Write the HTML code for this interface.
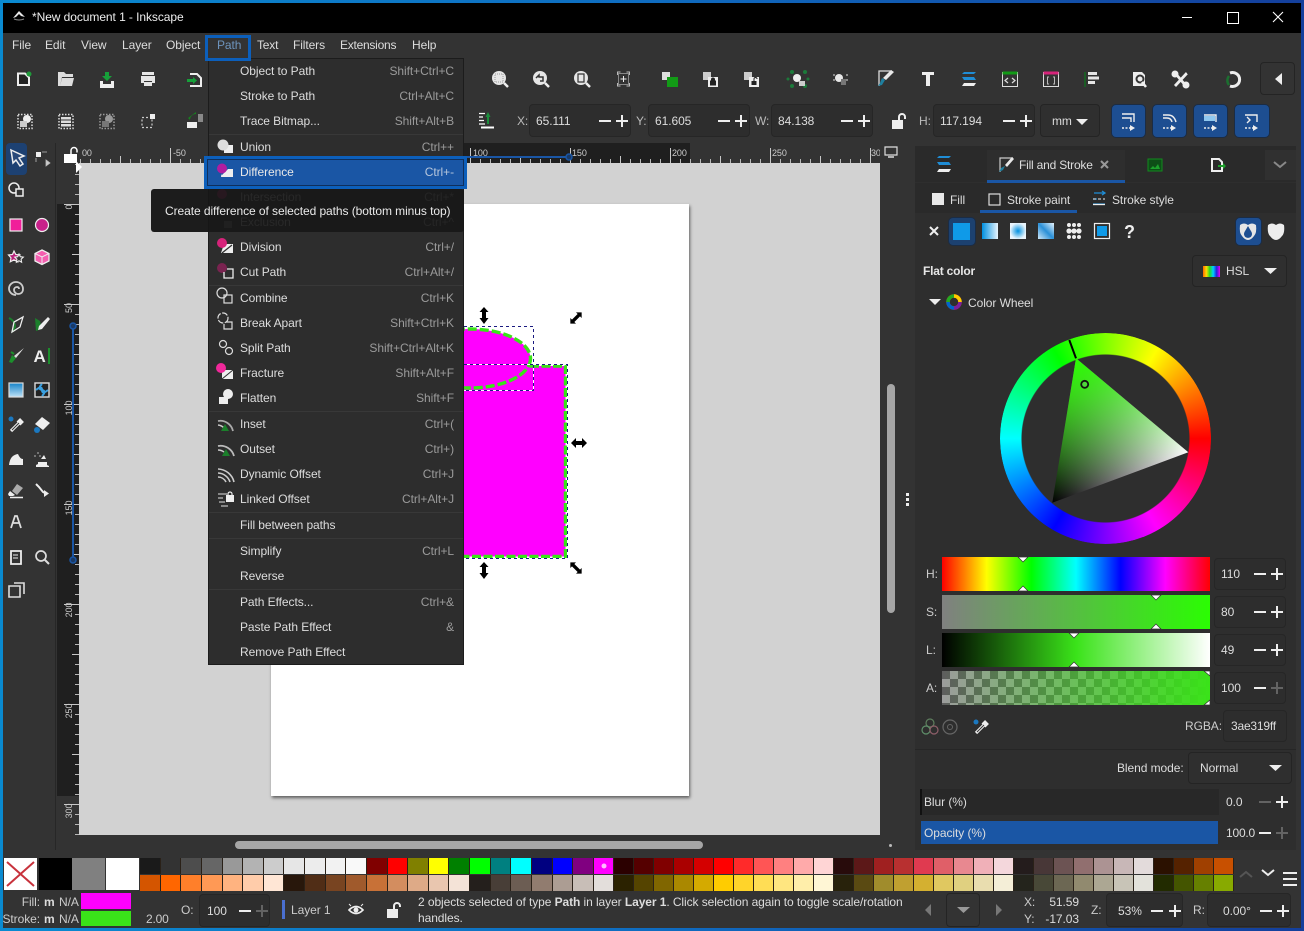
<!DOCTYPE html>
<html><head><meta charset="utf-8"><title>New document 1 - Inkscape</title>
<style>
html,body{margin:0;padding:0;background:#333}
#r{position:relative;width:1304px;height:931px;overflow:hidden;background:linear-gradient(90deg,#0a8ad0 0,#0f6cc0 50%,#143f9c 100%);font:12px/14px "Liberation Sans",sans-serif;color:#ddd;letter-spacing:-.07px}
#r div,#r span.a,#r svg{position:absolute}
.t{position:absolute;white-space:nowrap;line-height:14px}
.d{color:#9b9b9b}
.s{background:#2d2d2d;border:1px solid #262626;border-radius:4px;box-sizing:border-box}
.m{width:12px;height:2px;background:#eee}
.p{width:12px;height:12px;background:linear-gradient(#eee,#eee) center/12px 2px no-repeat,linear-gradient(#eee,#eee) center/2px 12px no-repeat}
.o{opacity:.28}
.b{background:#1d4e91;border:1px solid #1b2c44;border-radius:5px;box-sizing:border-box}
.dd{background:#2f2f2f;border:1px solid #242424;border-radius:4px;box-sizing:border-box}
.row{display:flex;left:140px;height:16px}
.row i{display:block;flex:none;width:20px;height:16px;box-sizing:border-box;border-right:1px solid #2a2118}
.row i:nth-child(-n+22){width:20.64px}
.rl{font-size:9px;color:#ccc;line-height:10px;white-space:nowrap}
.v{transform:translate(-50%,-50%) rotate(-90deg)}
.k{right:10px;color:#9b9b9b;white-space:nowrap;line-height:14px}
</style></head><body><div id="r">

<!-- window base -->
<div style="left:3px;top:3px;width:1298px;height:30px;background:#000"></div>
<div style="left:3px;top:33px;width:1298px;height:895px;background:#333"></div>
<div class="t" style="left:32px;top:10px;color:#eee">*New document 1 - Inkscape</div>

<!-- window buttons -->
<div style="left:1182px;top:17px;width:10px;height:1px;background:#fff"></div>
<div style="left:1227px;top:12px;width:10px;height:10px;border:1px solid #fff"></div>

<!-- menu bar -->
<div class="t" style="left:12px;top:38px">File</div>
<div class="t" style="left:45px;top:38px">Edit</div>
<div class="t" style="left:81px;top:38px">View</div>
<div class="t" style="left:122px;top:38px">Layer</div>
<div class="t" style="left:166px;top:38px">Object</div>
<div class="t" style="left:257px;top:38px;letter-spacing:-.2px">Text</div>
<div class="t" style="left:293px;top:38px;letter-spacing:-.1px">Filters</div>
<div class="t" style="left:340px;top:38px;letter-spacing:-.25px">Extensions</div>
<div class="t" style="left:412px;top:38px">Help</div>

<!-- rulers -->
<div style="left:79px;top:143px;width:801px;height:20px;background:linear-gradient(90deg,#333 0,#333 192px,#1f1f1f 192px,#1f1f1f 611px,#333 611px)"></div>
<div style="left:79px;top:143px;width:801px;height:20px;background:linear-gradient(90deg,#c8c8c8 1px,transparent 1px) 91px 100%/100px 15px repeat-x,linear-gradient(90deg,#c8c8c8 1px,transparent 1px) 41px 100%/100px 7px repeat-x,linear-gradient(90deg,#b8b8b8 1px,transparent 1px) 1px 100%/10px 4px repeat-x"></div>
<div style="left:57px;top:163px;width:22px;height:672px;background:linear-gradient(#333 0,#333 41px,#1f1f1f 41px,#1f1f1f 633px,#333 633px)"></div>
<div style="left:57px;top:163px;width:22px;height:672px;background:linear-gradient(#c8c8c8 1px,transparent 1px) 100% 41px/15px 100px repeat-y,linear-gradient(#c8c8c8 1px,transparent 1px) 100% 91px/7px 100px repeat-y,linear-gradient(#b8b8b8 1px,transparent 1px) 100% 1px/4px 10px repeat-y"></div>
<div class="rl" style="left:82px;top:148px">00</div>
<div class="rl" style="left:173px;top:148px">-50</div>
<div class="rl" style="left:473px;top:148px">100</div>
<div class="rl" style="left:572px;top:148px">150</div>
<div class="rl" style="left:672px;top:148px">200</div>
<div class="rl" style="left:772px;top:148px">250</div>
<div class="rl" style="left:871px;top:148px;width:9px;overflow:hidden">300</div>
<div class="rl v" style="left:69px;top:207px">0</div>
<div class="rl v" style="left:69px;top:308px">50</div>
<div class="rl v" style="left:69px;top:408px">100</div>
<div class="rl v" style="left:69px;top:508px">150</div>
<div class="rl v" style="left:69px;top:610px">200</div>
<div class="rl v" style="left:69px;top:711px">250</div>
<div class="rl v" style="left:69px;top:811px">300</div>

<!-- canvas -->
<div style="left:79px;top:163px;width:801px;height:672px;background:#d2d2d2;overflow:hidden">
  <div style="left:192px;top:41px;width:418px;height:592px;background:#fff;box-shadow:1px 2px 3px rgba(0,0,0,.55)"></div>
</div>
<!-- scrollbars -->
<div style="left:235px;top:841px;width:468px;height:8px;background:#a6a6a6;border-radius:4px"></div>
<div style="left:887px;top:384px;width:8px;height:229px;background:#a6a6a6;border-radius:4px"></div>
<div style="left:889px;top:844px;width:3px;height:3px;background:#bbb;border-radius:2px"></div>
<div style="left:906px;top:493px;width:3px;height:3px;background:#eee"></div>
<div style="left:906px;top:498px;width:3px;height:3px;background:#eee"></div>
<div style="left:906px;top:503px;width:3px;height:3px;background:#eee"></div>

<!-- spin boxes top -->
<div class="t" style="left:517px;top:114px;color:#bbb">X:</div>
<div class="s" style="left:529px;top:104px;width:102px;height:33px"><span class="t" style="left:6px;top:9px">65.111</span><div class="m" style="left:69px;top:15px"></div><div class="p" style="left:86px;top:10px"></div></div>
<div class="t" style="left:636px;top:114px;color:#bbb">Y:</div>
<div class="s" style="left:648px;top:104px;width:102px;height:33px"><span class="t" style="left:6px;top:9px">61.605</span><div class="m" style="left:69px;top:15px"></div><div class="p" style="left:86px;top:10px"></div></div>
<div class="t" style="left:755px;top:114px;color:#bbb">W:</div>
<div class="s" style="left:771px;top:104px;width:102px;height:33px"><span class="t" style="left:6px;top:9px">84.138</span><div class="m" style="left:69px;top:15px"></div><div class="p" style="left:86px;top:10px"></div></div>
<div class="t" style="left:919px;top:114px;color:#bbb">H:</div>
<div class="s" style="left:933px;top:104px;width:102px;height:33px"><span class="t" style="left:6px;top:9px">117.194</span><div class="m" style="left:69px;top:15px"></div><div class="p" style="left:86px;top:10px"></div></div>
<div class="dd" style="left:1040px;top:104px;width:60px;height:33px"><span class="t" style="left:11px;top:9px">mm</span></div>
<div class="b" style="left:1111px;top:104px;width:35px;height:34px"></div>
<div class="b" style="left:1152px;top:104px;width:35px;height:34px"></div>
<div class="b" style="left:1193px;top:104px;width:35px;height:34px"></div>
<div class="b" style="left:1234px;top:104px;width:36px;height:34px"></div>
<div class="dd" style="left:1260px;top:62px;width:35px;height:33px;background:#333"></div>

<!-- left tool selected -->
<div style="left:6px;top:143px;width:21px;height:32px;background:#1d4172;border-radius:4px"></div>

<!-- separators -->
<div style="left:55px;top:143px;width:1px;height:707px;background:#272727"></div>

<!-- right panel -->
<div style="left:915px;top:146px;width:381px;height:704px;background:#2e2e2e"></div>
<div style="left:915px;top:146px;width:381px;height:36px;background:#2a2a2a"></div>
<div style="left:987px;top:150px;width:138px;height:30px;background:#2e2e2e"></div>
<div style="left:987px;top:180px;width:138px;height:3px;background:#1a56a5"></div>
<div style="left:1265px;top:150px;width:31px;height:30px;background:#303030"></div>
<div class="t" style="left:1019px;top:158px;letter-spacing:-.2px">Fill and Stroke</div>
<div style="left:915px;top:183px;width:381px;height:30px;background:#2a2a2a"></div>
<div style="left:980px;top:210px;width:97px;height:3px;background:#1a56a5"></div>
<div class="t" style="left:950px;top:193px">Fill</div>
<div class="t" style="left:1007px;top:193px">Stroke paint</div>
<div class="t" style="left:1112px;top:193px">Stroke style</div>
<div class="b" style="left:948px;top:217px;width:28px;height:29px;background:#1c4170"></div>
<div class="b" style="left:1235px;top:217px;width:27px;height:29px"></div>
<div class="t" style="left:923px;top:264px;font-weight:bold;color:#e6e6e6;letter-spacing:-.2px">Flat color</div>
<div class="dd" style="left:1192px;top:255px;width:95px;height:32px"><span class="t" style="left:33px;top:8px">HSL</span></div>
<div class="t" style="left:968px;top:296px">Color Wheel</div>

<!-- sliders -->
<div class="t" style="left:926px;top:567px;color:#ccc">H:</div>
<div class="t" style="left:926px;top:605px;color:#ccc">S:</div>
<div class="t" style="left:926px;top:643px;color:#ccc">L:</div>
<div class="t" style="left:926px;top:681px;color:#ccc">A:</div>
<div style="left:942px;top:557px;width:268px;height:34px;background:linear-gradient(90deg,#f00,#ff0 16.67%,#0f0 33.33%,#0ff 50%,#00f 66.67%,#f0f 83.33%,#f00)"></div>
<div style="left:942px;top:595px;width:268px;height:34px;background:linear-gradient(90deg,#808080,#2bfd03)"></div>
<div style="left:942px;top:633px;width:268px;height:34px;background:linear-gradient(90deg,#000,#3ae319 50%,#fff)"></div>
<div style="left:942px;top:671px;width:268px;height:34px;background:linear-gradient(90deg,rgba(58,227,25,0),#3ae319),repeating-conic-gradient(#9c9c9c 0 25%,#5e5e5e 0 50%) 0 0/16px 16px"></div>
<div class="s" style="left:1214px;top:558px;width:72px;height:32px"><span class="t" style="left:6px;top:8px">110</span><div class="m" style="left:39px;top:14px"></div><div class="p" style="left:56px;top:9px"></div></div>
<div class="s" style="left:1214px;top:596px;width:72px;height:32px"><span class="t" style="left:6px;top:8px">80</span><div class="m" style="left:39px;top:14px"></div><div class="p" style="left:56px;top:9px"></div></div>
<div class="s" style="left:1214px;top:634px;width:72px;height:32px"><span class="t" style="left:6px;top:8px">49</span><div class="m" style="left:39px;top:14px"></div><div class="p" style="left:56px;top:9px"></div></div>
<div class="s" style="left:1214px;top:672px;width:72px;height:32px"><span class="t" style="left:6px;top:8px">100</span><div class="m" style="left:39px;top:14px"></div><div class="p o" style="left:56px;top:9px"></div></div>
<div class="t" style="left:1185px;top:719px;color:#ccc">RGBA:</div>
<div class="s" style="left:1223px;top:710px;width:64px;height:32px"><span class="t" style="left:7px;top:8px;letter-spacing:-.2px">3ae319ff</span></div>
<div style="left:915px;top:749px;width:381px;height:1px;background:#262626"></div>
<div class="t" style="left:1117px;top:761px">Blend mode:</div>
<div class="dd" style="left:1188px;top:752px;width:104px;height:32px"><span class="t" style="left:11px;top:8px">Normal</span></div>
<div style="left:920px;top:789px;width:299px;height:26px;background:#282828;border-left:2px solid #111;box-sizing:border-box"></div>
<div class="t" style="left:924px;top:795px">Blur (%)</div>
<div class="t" style="left:1226px;top:795px">0.0</div>
<div class="m o" style="left:1259px;top:801px"></div><div class="p" style="left:1276px;top:796px"></div>
<div style="left:921px;top:821px;width:297px;height:23px;background:#1a56a5"></div>
<div class="t" style="left:924px;top:826px">Opacity (%)</div>
<div class="t" style="left:1226px;top:826px;letter-spacing:-.2px">100.0</div>
<div class="m" style="left:1259px;top:832px"></div><div class="p o" style="left:1276px;top:827px"></div>

<!-- palette -->
<div style="left:4px;top:858px;width:33px;height:32px;background:#fff"></div>
<div style="left:39px;top:858px;width:33px;height:32px;background:#000"></div>
<div style="left:72px;top:858px;width:33px;height:32px;background:#808080"></div>
<div style="left:106px;top:858px;width:33px;height:32px;background:#fff"></div>
<div class="row" style="top:858px">
<i style="background:#1a1a1a"></i><i style="background:#333"></i><i style="background:#4d4d4d"></i><i style="background:#666"></i><i style="background:#999"></i><i style="background:#b3b3b3"></i><i style="background:#ccc"></i><i style="background:#e6e6e6"></i><i style="background:#ececec"></i><i style="background:#f2f2f2"></i><i style="background:#f9f9f9"></i><i style="background:#800000"></i><i style="background:#f00"></i><i style="background:#808000"></i><i style="background:#ff0"></i><i style="background:#008000"></i><i style="background:#0f0"></i><i style="background:#008080"></i><i style="background:#0ff"></i><i style="background:#000080"></i><i style="background:#00f"></i><i style="background:#800080"></i><i style="background:#f0f"></i><i style="background:#2b0000"></i><i style="background:#550000"></i><i style="background:#800000"></i><i style="background:#aa0000"></i><i style="background:#d40000"></i><i style="background:#f00"></i><i style="background:#ff2a2a"></i><i style="background:#f55"></i><i style="background:#ff8080"></i><i style="background:#faa"></i><i style="background:#ffd5d5"></i><i style="background:#280b0b"></i><i style="background:#5c1818"></i><i style="background:#a02020"></i><i style="background:#b83030"></i><i style="background:#e03a50"></i><i style="background:#e05f68"></i><i style="background:#e88890"></i><i style="background:#f0b0b8"></i><i style="background:#f4d7dc"></i><i style="background:#241c1c"></i><i style="background:#483737"></i><i style="background:#6c5353"></i><i style="background:#916f6f"></i><i style="background:#ac9393"></i><i style="background:#c8b7b7"></i><i style="background:#e3dbdb"></i><i style="background:#2b1100"></i><i style="background:#552200"></i><i style="background:#a04000"></i><i style="background:#c85000"></i>
</div>
<div class="row" style="top:875px">
<i style="background:#d45500"></i><i style="background:#f60"></i><i style="background:#ff7f2a"></i><i style="background:#f95"></i><i style="background:#ffb380"></i><i style="background:#fca"></i><i style="background:#ffe6d5"></i><i style="background:#28170b"></i><i style="background:#502d16"></i><i style="background:#784421"></i><i style="background:#a05a2c"></i><i style="background:#c87137"></i><i style="background:#d38d5f"></i><i style="background:#deaa87"></i><i style="background:#e9c6af"></i><i style="background:#f4e3d7"></i><i style="background:#241f1c"></i><i style="background:#483e37"></i><i style="background:#6c5d53"></i><i style="background:#917c6f"></i><i style="background:#ac9d93"></i><i style="background:#c8beb7"></i><i style="background:#e3dedb"></i><i style="background:#2b2200"></i><i style="background:#554400"></i><i style="background:#806600"></i><i style="background:#aa8800"></i><i style="background:#d4aa00"></i><i style="background:#fc0"></i><i style="background:#ffd42a"></i><i style="background:#fd5"></i><i style="background:#ffe680"></i><i style="background:#fea"></i><i style="background:#fff6d5"></i><i style="background:#28220b"></i><i style="background:#5a4a12"></i><i style="background:#a08c2c"></i><i style="background:#c0a030"></i><i style="background:#d4b030"></i><i style="background:#e0c860"></i><i style="background:#e0d080"></i><i style="background:#e9ddaf"></i><i style="background:#f4eed7"></i><i style="background:#24241c"></i><i style="background:#484837"></i><i style="background:#6c6753"></i><i style="background:#918a6f"></i><i style="background:#aca793"></i><i style="background:#c8c4b7"></i><i style="background:#e3e2db"></i><i style="background:#222b00"></i><i style="background:#445500"></i><i style="background:#668000"></i><i style="background:#88aa00"></i>
</div>

<!-- status -->
<div class="t" style="right:1264px;top:895px;color:#ccc">Fill:</div>
<div class="t" style="right:1264px;top:912px;color:#ccc">Stroke:</div>
<div class="t" style="left:44px;top:895px;font-weight:bold">m</div>
<div class="t" style="left:44px;top:912px;font-weight:bold">m</div>
<div class="t" style="left:59px;top:895px;color:#ccc">N/A</div>
<div class="t" style="left:59px;top:912px;color:#ccc">N/A</div>
<div style="left:81px;top:893px;width:50px;height:16px;background:#f0f"></div>
<div style="left:81px;top:911px;width:50px;height:15px;background:#3ae319"></div>
<div class="t" style="left:146px;top:912px;color:#ccc;letter-spacing:-.2px">2.00</div>
<div class="t" style="left:181px;top:903px;color:#ccc">O:</div>
<div class="s" style="left:199px;top:894px;width:71px;height:33px"><span class="t" style="left:7px;top:9px">100</span><div class="m" style="left:39px;top:15px"></div><div class="p o" style="left:56px;top:10px"></div></div>
<div style="left:282px;top:900px;width:3px;height:19px;background:#4a6fd0"></div>
<div class="t" style="left:291px;top:903px;color:#ccc">Layer 1</div>
<div class="t" style="left:418px;top:895px;color:#ddd;letter-spacing:-.08px">2 objects selected of type <b>Path</b> in layer <b>Layer 1</b>. Click selection again to toggle scale/rotation</div>
<div class="t" style="left:418px;top:911px;color:#ddd">handles.</div>
<div class="dd" style="left:946px;top:893px;width:34px;height:34px;background:#333"></div>
<div class="t" style="left:1024px;top:895px;color:#ccc">X:</div>
<div class="t" style="left:1024px;top:912px;color:#ccc">Y:</div>
<div class="t" style="right:225px;top:895px">51.59</div>
<div class="t" style="right:225px;top:912px">-17.03</div>
<div class="t" style="left:1091px;top:903px;color:#ccc">Z:</div>
<div class="s" style="left:1106px;top:893px;width:77px;height:34px"><span class="t" style="left:11px;top:10px">53%</span><div class="m" style="left:44px;top:16px"></div><div class="p" style="left:62px;top:11px"></div></div>
<div class="t" style="left:1193px;top:903px;color:#ccc">R:</div>
<div class="s" style="left:1207px;top:893px;width:84px;height:34px"><span class="t" style="left:15px;top:10px">0.00°</span><div class="m" style="left:52px;top:16px"></div><div class="p" style="left:69px;top:11px"></div></div>

<!-- colour wheel ring -->
<div style="left:1000px;top:333px;width:211px;height:211px;border-radius:50%;background:conic-gradient(from 90deg,#f00,#f0f,#00f,#0ff,#0f0,#ff0,#f00);-webkit-mask:radial-gradient(circle,transparent 83.5px,#000 84.5px);mask:radial-gradient(circle,transparent 83.5px,#000 84.5px)"></div>

<!-- main icon layer -->
<svg width="1304" height="931" style="left:0;top:0" fill="none">
<defs>
<linearGradient id="g1" gradientUnits="userSpaceOnUse" x1="1052.3" y1="502.7" x2="1188.3" y2="452.3"><stop offset="0" stop-color="#000"/><stop offset="1" stop-color="#fff"/></linearGradient>
<linearGradient id="g2" gradientUnits="userSpaceOnUse" x1="1076" y1="358.3" x2="1120.2" y2="477.5"><stop offset="0" stop-color="#2aff00"/><stop offset="1" stop-color="#2aff00" stop-opacity="0"/></linearGradient>
<linearGradient id="lg"><stop offset="0" stop-color="#0090e0"/><stop offset="1" stop-color="#e8f4fc"/></linearGradient>
<radialGradient id="rg"><stop offset="0" stop-color="#0090e0"/><stop offset="1" stop-color="#e8f4fc"/></radialGradient>
<linearGradient id="mg" x1="0" y1="1" x2="1" y2="0"><stop offset="0" stop-color="#cfe8f8"/><stop offset=".5" stop-color="#2a90d8"/><stop offset="1" stop-color="#e8f4fc"/></linearGradient>
<linearGradient id="gg" x1="0" y1="0" x2="0" y2="1"><stop offset="0" stop-color="#1482c8"/><stop offset="1" stop-color="#bfe2f7"/></linearGradient>
<linearGradient id="hs"><stop offset="0" stop-color="#f60"/><stop offset=".2" stop-color="#fd0"/><stop offset=".4" stop-color="#2d2"/><stop offset=".6" stop-color="#0cf"/><stop offset=".8" stop-color="#22d"/><stop offset="1" stop-color="#e0e"/></linearGradient>
</defs>

<!-- canvas shapes -->
<rect x="464" y="366" width="101.500" height="190.500" fill="#f0f"/>
<ellipse cx="470" cy="358.500" rx="60.500" ry="29.500" fill="#f0f"/>
<ellipse cx="470" cy="358.500" rx="60.500" ry="29.500" stroke="#3ae319" stroke-width="3.400" stroke-dasharray="9 3"/>
<path d="M530 366H565.500V556.500H464" stroke="#3ae319" stroke-width="3.400" stroke-dasharray="9 2.500"/>
<path d="M464 326.500H533.500V390.500H464M464 364.500H567.500V558.500H464" stroke="#fff" stroke-width="1"/>
<path d="M464 326.500H533.500V390.500H464M464 364.500H567.500V558.500H464" stroke="#1a1a80" stroke-width="1" stroke-dasharray="3 3"/>
<g fill="#000">
<path d="M484 307l4.500 5h-2.500v6h2.500l-4.500 6-4.500-6h2.500v-6h-2.500z"/>
<path d="M484 562l4.500 5h-2.500v6h2.500l-4.500 6-4.500-6h2.500v-6h-2.500z"/>
<path d="M571 443l5-5v3h6v-3l5 5-5 5v-3h-6v3z"/>
<path transform="translate(576,318) rotate(-45)" d="M-8 0l4-4v2.300h8V-4l4 4-4 4v-2.300h-8V4z"/>
<path transform="translate(576,568) rotate(45)" d="M-8 0l4-4v2.300h8V-4l4 4-4 4v-2.300h-8V4z"/>
</g>
<!-- ruler selection -->
<path d="M464 157H569" stroke="#1a56a5" stroke-width="2"/><circle cx="569" cy="157" r="3" stroke="#1a56a5" stroke-width="1.500" fill="#1a3a66"/>
<path d="M73 326V559" stroke="#1a56a5" stroke-width="2"/><circle cx="73" cy="326" r="3" stroke="#1a56a5" stroke-width="1.500" fill="#1a3a66"/><circle cx="73" cy="560" r="3" stroke="#1a56a5" stroke-width="1.500" fill="#1a3a66"/>
<path d="M77 162l6 6-6 6z" fill="#fff" transform="translate(-1,-1)"/>
<!-- ruler lock + monitor -->
<path d="M64 154h13v9H64z" fill="#fff"/><path d="M71 154v-3.500a3 3 0 0 1 6 0v2" stroke="#fff" stroke-width="1.500"/>
<path d="M885 147h12v8h-12z" stroke="#ddd" stroke-width="1.200"/><path d="M888 157h6" stroke="#ddd" stroke-width="1.500"/>

<!-- titlebar -->
<path d="M13 18L19 11L25 17L21 16L19 14L16 17z" fill="#e8e8e8"/><path d="M14 19Q19 21 24 19" stroke="#888" stroke-width="1"/>
<path d="M1273 12l10 10M1283 12l-10 10" stroke="#fff" stroke-width="1.100"/>

<!-- toolbar row 1 -->
<g stroke="#eee" stroke-width="2">
<path d="M18 73.500h7l4 4V85H18z" fill="#222"/>
</g>
<circle cx="29" cy="74" r="2.500" fill="#1f9b3a"/>
<path d="M58 72h6l2 2h7v3H62l-2 9h-2z M62 78h12l-2 8H60z" fill="#ddd"/>
<path d="M100 81h3v3h8v-3h3v7h-14z" fill="#eee"/><path d="M105 72h4v4h3l-5 5-5-5h3z" fill="#17a03a"/>
<path d="M142 75h12v-3h-12zM141 76h14v7h-3v-2h-8v2h-3zM144 82h8v4h-8z" fill="#e6e6e6"/>
<path d="M190 74h7l4 4v8h-11" stroke="#eee" stroke-width="2"/><path d="M187 79h6v-2l4 3.500-4 3.500v-2h-6z" fill="#17a03a"/>
<!-- toolbar row 2 -->
<rect x="18" y="114.500" width="14" height="14" stroke="#ddd" stroke-width="1.500" stroke-dasharray="1.500 1.500"/><circle cx="27" cy="119" r="4" fill="#eee"/><path d="M20 121h7v6h-7z" fill="#ccc"/>
<rect x="59" y="114.500" width="14" height="14" stroke="#ddd" stroke-width="1.500" stroke-dasharray="1.500 1.500"/><path d="M61 117h10v2.500H61zM61 120.500h10V123H61zM61 124h10v2.500H61z" fill="#ddd"/>
<rect x="100" y="114.500" width="14" height="14" stroke="#999" stroke-width="1.500" stroke-dasharray="1.500 1.500"/><circle cx="109" cy="119" r="4" fill="#999"/><path d="M102 121h7v6h-7z" fill="#777"/>
<rect x="142" y="117.500" width="10" height="10" stroke="#ccc" stroke-width="1.200" stroke-dasharray="2 2"/><path d="M150 114h5v5h-5z" fill="#eee"/>
<path d="M187 122h10v6h-10z" fill="#eee"/><path d="M198 114h5v8h-5z" fill="#888"/><path d="M190 120a6 6 0 0 1 6-6v-2l-8 6 3 3" fill="#17801f"/>
<g stroke="#fff"><path d="M479 113.500h6M479 117h4M479 120.500h5M479 124h6" stroke-width="1.300"/><path d="M481 127.500h13" stroke-width="2"/></g><path d="M488 112l2.500 5h-1.500v7h-2v-7h-1.500z" fill="#1c8f3c"/>

<!-- zoom etc -->
<g>
<circle cx="499" cy="78" r="7" fill="#e6e6e6"/><path d="M504 83l4 4" stroke="#eee" stroke-width="2.500"/><rect x="495" y="74" width="8" height="8" stroke="#999" stroke-dasharray="1 1"/>
<circle cx="540" cy="78" r="7" fill="#e6e6e6"/><path d="M545 83l4 4" stroke="#eee" stroke-width="2.500"/><path d="M536 78l3-3v2h4v4h-3" stroke="#333" stroke-width="1.500"/>
<circle cx="581" cy="78" r="7" fill="#e6e6e6"/><path d="M586 83l4 4" stroke="#eee" stroke-width="2.500"/><path d="M578 74h6v8h-6z" stroke="#333" stroke-width="1.200"/>
<path d="M617.500 75v-3h3M626.500 72h3v3M629.500 83v3h-3M620.500 86h-3v-3" stroke="#bbb"/><path d="M618.500 73.500h10v11h-10z" stroke="#888"/><path d="M623.500 76v6M620.500 79h6" stroke="#eee"/>
<path d="M662 72h8v8h-8z" fill="#ddd"/><path d="M667 77h11v10h-11z" fill="#129a16"/>
<path d="M703 72h8v8h-8z" fill="#ccc"/><path d="M708 77h10v10h-10z" fill="#eee"/><path d="M710.500 81h5v4h-5z M711.500 81v-1.500a1.500 1.500 0 0 1 3 0V81" fill="#222" stroke="#222"/>
<path d="M744 72h8v8h-8z" fill="#ccc"/><path d="M749 77h10v10h-10z" fill="#eee"/><path d="M751.500 81h5v4h-5z" fill="#222"/><path d="M754 81v-2a1.500 1.500 0 0 1 3 0" stroke="#222"/>
<g fill="#1c7a3a"><circle cx="792" cy="72" r="2"/><circle cx="805" cy="72" r="2"/><circle cx="792" cy="86" r="2"/><circle cx="805" cy="86" r="2"/><circle cx="788" cy="79" r="1.500"/><circle cx="808" cy="79" r="1.500"/></g><circle cx="797" cy="78" r="4" fill="#eee"/><path d="M799 81h6v5h-6z" fill="#ccc"/>
<path d="M834 74v10M847 74v10" stroke="#ddd" stroke-dasharray="2 3"/><circle cx="839" cy="78" r="4" fill="#e8e8e8"/><path d="M841 79h5v6h-5z" fill="#777"/>
<path d="M879 86V71h13" stroke="#ddd" stroke-width="1.300"/><path d="M894 72l-8 8-3-2 8-8z" fill="#e8e8e8"/><path d="M885 80l-3-2-2 5-2 3 4-1z" fill="#1f7f9f"/>
<path d="M922 72h12v3h-4v11h-4V75h-4z" fill="#eee"/>
<path d="M962 74h12l2-2h-12zM964 80h12l-2-3h-12z" fill="#1f8dd6"/><path d="M962 86h12l2-3h-12z" fill="#eee"/>
<rect x="1002.500" y="72.500" width="15" height="14" stroke="#ddd"/><rect x="1002.500" y="71.500" width="15" height="3" fill="#129a16"/><path d="M1008 78l-3 2.500 3 2.500M1012 78l3 2.500-3 2.500" stroke="#ddd" stroke-width="1.200"/>
<rect x="1043.500" y="72.500" width="15" height="14" stroke="#ddd"/><rect x="1043.500" y="71.500" width="15" height="3" fill="#d6237a"/><path d="M1049 77h-1.500v7h1.500M1053 77h1.500v7H1053" stroke="#bbb"/>
<path d="M1085 72v15" stroke="#126a1f" stroke-width="1.500"/><path d="M1088 72h9v3h-9zM1088 76.500h11v3h-11zM1088 81h7v3h-7z" fill="#e6e6e6"/>
<path d="M1133 72h9l3 3v11h-12z" fill="#eee"/><circle cx="1140" cy="79" r="3.500" stroke="#333" stroke-width="2"/><path d="M1142 82l4 5" stroke="#eee" stroke-width="2.500"/>
<path d="M1175 73l11 13M1187 73l-12 13" stroke="#eee" stroke-width="2.800"/><circle cx="1175" cy="74" r="3.500" fill="#eee"/><circle cx="1186" cy="85" r="3.500" fill="#eee"/><path d="M1186 71l2 3" stroke="#333" stroke-width="1"/>
<path d="M1230 73a7 7 0 1 1 0 13" stroke="#eee" stroke-width="3"/><path d="M1229 76a7 7 0 0 0 0 9" stroke="#1c6f30" stroke-width="2.500"/>
<path d="M1282 73v12l-7-6z" fill="#eee"/>
</g>

<!-- align/lock/dropdown -->
<path d="M892 120h11v9h-11z" fill="#eee"/><path d="M899 120v-3a3 3 0 0 1 6 0v2" stroke="#eee" stroke-width="2"/>
<path d="M1076 119h12l-6 6z" fill="#eee"/>
<g stroke="#eee" stroke-width="1.400">
<path d="M1122 114h12v8M1122 118h9v4"/><path d="M1163 115h5q6 0 8 7M1163 118h4q4 0 5 4"/><path d="M1204 115h12v7" /><path d="M1245 115h12v7M1247 117l3 3-3 3"/>
<path d="M1122 128h8M1163 128h8M1204 128h8M1245 128h8" stroke-dasharray="2 1.500"/>
</g>
<path d="M1130 125v6l5-3zM1171 125v6l5-3zM1212 125v6l5-3zM1253 125v6l5-3z" fill="#eee"/>
<rect x="1204" y="116" width="11" height="5" fill="#8fc8ef"/>

<!-- tools -->
<path d="M11 150l13 6-5 2 4 6-3 2-4-6-3 3z" fill="#2a4a7a" stroke="#eee" stroke-width="1.500"/>
<rect x="36" y="152" width="5" height="5" fill="#eee"/><path d="M42 152h5M36 158v4M46 160l4 3-4 3z" fill="#ccc" stroke="#bbb" stroke-width=".8"/>
<circle cx="14" cy="188" r="5" stroke="#eee" stroke-width="1.500"/><rect x="16" y="189" width="7" height="7" stroke="#eee" stroke-width="1.500" fill="#333"/>
<rect x="10" y="219" width="12" height="12" fill="#f01f9a" stroke="#eee" stroke-width="1.200"/>
<circle cx="42" cy="225" r="6.500" fill="#c8208a" stroke="#eee" stroke-width="1.200"/>
<path d="M13 251l1.800 3.500 4 .5-2.800 2.800.7 4-3.700-2-3.700 2 .7-4L7.500 255l4-.5z" fill="#b8207a" stroke="#eee" stroke-width="1.200" transform="translate(1,0)"/>
<path d="M19 254l1.300 2.700 3 .4-2.200 2.100.5 3-2.600-1.400-2.600 1.400.5-3-2.200-2.100 3-.4z" fill="#333" stroke="#eee" stroke-width="1.100"/>
<path d="M42 250l7 3.500v7.500l-7 3.500-7-3.500v-7.500z" fill="#f45fb0" stroke="#eee" stroke-width="1.300"/><path d="M35 253.500l7 3.500 7-3.500M42 257v7" stroke="#eee"/>
<path d="M16 295c-4 0-7-3-7-6.500S12 282 16 282s7 3 7 7-3 5-5 5-4-2-4-4 1.500-3 3-3 2 1 2 2" stroke="#ccc" stroke-width="1.800"/>
<path d="M9 318q6 3 6 9l-3 5" stroke="#1c7f2c" stroke-width="2"/><path d="M23 317l-9 5-2 10 8-5z" stroke="#eee" stroke-width="1.300"/>
<path d="M35 318l5 3 2 8-6 2z" fill="#1c7f2c"/><path d="M50 319l-2-2-9 9-1 4 4-1z" fill="#eee"/>
<path d="M9 362l3-7 4 3-4 5z" fill="#1c8f2c"/><path d="M24 348l-10 8 2 2z" fill="#ddd"/><path d="M11 352l3 2" stroke="#1c8f2c" stroke-width="2"/>
<text x="33.500" y="362" font-family="Liberation Sans" font-size="17" font-weight="bold" fill="#eee">A</text>
<path d="M49 348v16" stroke="#1c8f2c" stroke-width="2"/>
<rect x="9" y="383" width="14" height="14" fill="url(#gg)" stroke="#ddd" stroke-width="1.200"/>
<rect x="35" y="383" width="14" height="14" stroke="#ddd" stroke-width="1.400" fill="#222"/><path d="M42 384q-5 5 0 6 5 1 0 6M36 390q6-5 6 0t6 0" stroke="#3aa0e0" stroke-width="2"/>
<path d="M11 431l9-9" stroke="#eee" stroke-width="3.200"/><path d="M18.500 423.500l3.500-3.500" stroke="#eee" stroke-width="5.500"/><path d="M12 430l7-7" stroke="#333" stroke-width="1"/><circle cx="11" cy="419" r="2.500" fill="#1b78c0"/>
<path d="M42 417l8 6-7 7-8-6z" fill="#eee"/><circle cx="37" cy="430" r="3" fill="#1b78c0"/>
<path d="M9 465q1-10 9-11 2 5 5 5v6z" fill="#eee"/>
<path d="M38 462h9v3l2 1v1H36v-2l2-1z M41 459l3-4 2 4z" fill="#eee"/><circle cx="38" cy="453" r="1" fill="#888"/><circle cx="35" cy="456" r="1" fill="#888"/><circle cx="40" cy="456" r="1" fill="#888"/>
<path d="M17 484l6 4-6 7-5-4z" fill="#aaa"/><path d="M10 491l5 4-2 1h-4l-1-2z" fill="#eee"/><path d="M10 497.500h13" stroke="#eee" stroke-width="1.500"/>
<path d="M36 484l3 3 4 5 2 1" stroke="#eee" stroke-width="2"/><path d="M44 490v7l5-3.500z" fill="#eee"/>
<path d="M11 528l4-12h2l4 12M13 523h6" stroke="#ddd" stroke-width="1.800"/>
<path d="M11 551h10v13H11z" stroke="#eee" stroke-width="1.800"/><path d="M13 555h5M13 558h5" stroke="#eee"/>
<circle cx="41" cy="556" r="5" stroke="#ddd" stroke-width="1.700"/><path d="M45 560l4 4" stroke="#ddd" stroke-width="2"/>
<path d="M14 583h10v11" stroke="#ddd" stroke-width="1.600"/><path d="M9 586h11v11H9z" stroke="#ddd" stroke-width="1.600"/>

<!-- right panel icons -->
<path d="M937 158h12l2-2h-12zM939 165h12l-2-3h-12z" fill="#1f8dd6"/><path d="M937 172h12l2-3h-12z" fill="#eee"/>
<path d="M1000 172V158h13" stroke="#ccc" stroke-width="1.200"/><path d="M1014 159l-7 8-2-2 7-8z" fill="#e8e8e8"/><path d="M1005 166l-2 4-4 2 2-4z" fill="#1f7f9f"/>
<path d="M1101 161l7 7M1108 161l-7 7" stroke="#999" stroke-width="2"/>
<rect x="1148" y="159" width="14" height="12" stroke="#138a1f" fill="#0e4d17"/><path d="M1150 169l3-3 2 2 3-4 2 5z" fill="#1da02c"/>
<path d="M1212 159h7l3 3v9h-10z" stroke="#eee" stroke-width="2"/><path d="M1218 165h5v-2l3 3-3 3v-2h-5z" fill="#1da02c"/>
<path d="M1274 162l6 5 6-5" stroke="#888" stroke-width="2"/>
<rect x="932" y="193" width="12" height="12" fill="#e8e8e8"/>
<rect x="989" y="194" width="11" height="11" stroke="#ddd" stroke-width="1.200"/>
<path d="M1094 193h11M1102 191l3 2-3 2M1093 199h4M1093 204h12" stroke="#1f8dd6" stroke-width="1.300"/><path d="M1093 204.500h12" stroke="#eee" stroke-width="1.300"/><path d="M1093 199h12" stroke="#eee" stroke-dasharray="3 2"/>
<path d="M930 227l8 8M938 227l-8 8" stroke="#eee" stroke-width="2"/>
<rect x="953" y="223" width="17" height="17" fill="#0f9ae8"/>
<rect x="982" y="223" width="16" height="16" fill="url(#lg)"/>
<rect x="1010" y="223" width="16" height="16" fill="url(#rg)"/>
<rect x="1038" y="223" width="16" height="16" fill="url(#mg)"/>
<g fill="#eee"><circle cx="1069" cy="225" r="2"/><circle cx="1074" cy="225" r="2"/><circle cx="1079" cy="225" r="2"/><circle cx="1069" cy="231" r="2.600"/><circle cx="1074" cy="231" r="2.600"/><circle cx="1079" cy="231" r="2.600"/><circle cx="1069" cy="237" r="2"/><circle cx="1074" cy="237" r="2"/><circle cx="1079" cy="237" r="2"/></g>
<rect x="1094.500" y="223.500" width="15" height="15" stroke="#eee" stroke-width="1.200"/><rect x="1097" y="226" width="10" height="10" fill="#0f9ae8"/>
<text x="1124" y="238" font-family="Liberation Sans" font-size="18" font-weight="bold" fill="#eee">?</text>
<path d="M1240 225q4-3 8 0 4-3 8 0 1 8-2 11-3 4-6 4t-6-4q-3-3-2-11z" fill="#e6e6e6"/><path d="M1248 226l3.500 6a4 4 0 1 1-7 0z" fill="#1d4e91"/>
<path d="M1268 225q4-3 8 0 4-3 8 0 1 8-2 11-3 4-6 4t-6-4q-3-3-2-11z" fill="#eee"/>
<rect x="1203" y="266" width="17" height="11" fill="url(#hs)"/>
<path d="M1264 268h13l-6.500 6z" fill="#eee"/>
<path d="M929 299h12l-6 6z" fill="#eee"/>
<circle cx="954" cy="302" r="6" stroke="#f40" stroke-width="3.500"/><path d="M954 296a6 6 0 0 1 6 6" stroke="#fc0" stroke-width="3.500"/><path d="M948 302a6 6 0 0 0 6 6" stroke="#06c" stroke-width="3.500"/><path d="M954 308a6 6 0 0 0 6-6" stroke="#7a1fa0" stroke-width="3.500"/><path d="M948 302a6 6 0 0 1 6-6" stroke="#2a2" stroke-width="3.500"/>

<!-- wheel triangle -->
<path d="M1076 358.300L1188.300 452.300L1052.300 502.700z" fill="url(#g1)"/>
<path d="M1076 358.300L1188.300 452.300L1052.300 502.700z" fill="url(#g2)"/>
<path d="M1069.300 340L1076 358.300" stroke="#000" stroke-width="2"/>
<circle cx="1084.700" cy="384.300" r="3.500" fill="#4ed63a" stroke="#111" stroke-width="1.800"/>

<!-- slider markers -->
<g fill="#fff" stroke="#333" stroke-width=".7">
<path d="M1018 557h10l-5 5z"/><path d="M1018 591h10l-5-5z"/>
<path d="M1151 595h10l-5 5z"/><path d="M1151 629h10l-5-5z"/>
<path d="M1069 633h10l-5 5z"/><path d="M1069 667h10l-5-5z"/>
<path d="M1204 671h6v5z"/><path d="M1204 705h6v-5z"/>
</g>
<g stroke="#5e7f5e" stroke-width="1.200"><circle cx="930" cy="723" r="4"/><circle cx="926" cy="730" r="4" stroke="#5f8f6a"/><circle cx="934" cy="730" r="4" stroke="#8f5f6a"/></g>
<circle cx="950" cy="727" r="7" stroke="#666" stroke-width="1.200"/><circle cx="950" cy="727" r="2.500" stroke="#666"/>
<path d="M976 733l9-9" stroke="#eee" stroke-width="3.200"/><path d="M983.500 725.500l3.500-3.500" stroke="#eee" stroke-width="5.500"/><path d="M977 732l7-7" stroke="#333" stroke-width="1"/><circle cx="976" cy="722" r="2.500" fill="#1b78c0"/>
<path d="M1269 765h13l-6.500 6z" fill="#eee"/>

<!-- palette X + chevrons -->
<path d="M7 862l27 24M34 862L7 886" stroke="#c8323c" stroke-width="2"/>
<circle cx="604" cy="866" r="2.500" fill="#fbf"/>
<path d="M1240 877l6-5 6 5" stroke="#555" stroke-width="2"/>
<path d="M1262 870l6 5 6-5" stroke="#eee" stroke-width="2"/>
<path d="M1283 873h14M1283 879h14M1283 885h14" stroke="#eee" stroke-width="2"/>

<!-- status icons -->
<path d="M349 910q7-7 14 0q-7 7-14 0z" stroke="#eee" stroke-width="1.600"/><circle cx="356" cy="910" r="2.500" fill="#eee"/><path d="M349 904l2 2M363 904l-2 2" stroke="#eee"/>
<path d="M387 909h11v9h-11z" fill="#eee"/><path d="M394 909v-3a3 3 0 0 1 6 0v1" stroke="#eee" stroke-width="2"/>
<path d="M931 904v12l-6-6z" fill="#777"/>
<path d="M957 907h13l-6.500 6z" fill="#999"/>
<path d="M996 904v12l6-6z" fill="#777"/>
</svg>

<!-- menu -->
<div style="left:208px;top:58px;width:256px;height:607px;background:#2d2d2d;box-shadow:inset 0 0 0 1px #1c1c1c"></div>
<div style="left:209px;top:134px;width:254px;height:1px;background:#383838"></div>
<div style="left:209px;top:285px;width:254px;height:1px;background:#383838"></div>
<div style="left:209px;top:411px;width:254px;height:1px;background:#383838"></div>
<div style="left:209px;top:512px;width:254px;height:1px;background:#383838"></div>
<div style="left:209px;top:538px;width:254px;height:1px;background:#383838"></div>
<div style="left:209px;top:589px;width:254px;height:1px;background:#383838"></div>
<div style="left:204px;top:156px;width:263px;height:33px;box-sizing:border-box;background:#1a56a5;border:3px solid #0c5fbb;box-shadow:inset 0 0 0 1px #0f2f5c"></div>
<div style="left:205px;top:35px;width:46px;height:26px;box-sizing:border-box;border:3px solid #0c5fbb"></div>
<div class="t" style="left:217px;top:38px;color:#6d94bd">Path</div>

<div style="left:208px;top:58px;width:256px;height:607px">
<span class="t" style="left:32px;top:6px">Object to Path</span><span class="t k" style="right:10px;top:6px;left:auto">Shift+Ctrl+C</span>
<span class="t" style="left:32px;top:31px">Stroke to Path</span><span class="t k" style="right:10px;top:31px;left:auto">Ctrl+Alt+C</span>
<span class="t" style="left:32px;top:56px">Trace Bitmap...</span><span class="t k" style="right:10px;top:56px;left:auto">Shift+Alt+B</span>
<span class="t" style="left:32px;top:82px">Union</span><span class="t k" style="right:10px;top:82px;left:auto">Ctrl++</span>
<span class="t" style="left:32px;top:107px;color:#e8e8e8">Difference</span><span class="t k" style="right:10px;top:107px;left:auto;color:#b6c6dc">Ctrl+-</span>
<span class="t" style="left:32px;top:132px;color:#8a8a8a">Intersection</span><span class="t k" style="right:10px;top:132px;left:auto;color:#777">Ctrl+*</span>
<span class="t" style="left:32px;top:157px;color:#8a8a8a">Exclusion</span><span class="t k" style="right:10px;top:157px;left:auto;color:#777">Ctrl+^</span>
<span class="t" style="left:32px;top:182px">Division</span><span class="t k" style="right:10px;top:182px;left:auto">Ctrl+/</span>
<span class="t" style="left:32px;top:207px">Cut Path</span><span class="t k" style="right:10px;top:207px;left:auto">Ctrl+Alt+/</span>
<span class="t" style="left:32px;top:233px">Combine</span><span class="t k" style="right:10px;top:233px;left:auto">Ctrl+K</span>
<span class="t" style="left:32px;top:258px">Break Apart</span><span class="t k" style="right:10px;top:258px;left:auto">Shift+Ctrl+K</span>
<span class="t" style="left:32px;top:283px">Split Path</span><span class="t k" style="right:10px;top:283px;left:auto">Shift+Ctrl+Alt+K</span>
<span class="t" style="left:32px;top:308px">Fracture</span><span class="t k" style="right:10px;top:308px;left:auto">Shift+Alt+F</span>
<span class="t" style="left:32px;top:333px">Flatten</span><span class="t k" style="right:10px;top:333px;left:auto">Shift+F</span>
<span class="t" style="left:32px;top:359px">Inset</span><span class="t k" style="right:10px;top:359px;left:auto">Ctrl+(</span>
<span class="t" style="left:32px;top:384px">Outset</span><span class="t k" style="right:10px;top:384px;left:auto">Ctrl+)</span>
<span class="t" style="left:32px;top:409px">Dynamic Offset</span><span class="t k" style="right:10px;top:409px;left:auto">Ctrl+J</span>
<span class="t" style="left:32px;top:434px">Linked Offset</span><span class="t k" style="right:10px;top:434px;left:auto">Ctrl+Alt+J</span>
<span class="t" style="left:32px;top:460px">Fill between paths</span>
<span class="t" style="left:32px;top:486px">Simplify</span><span class="t k" style="right:10px;top:486px;left:auto">Ctrl+L</span>
<span class="t" style="left:32px;top:511px">Reverse</span>
<span class="t" style="left:32px;top:537px">Path Effects...</span><span class="t k" style="right:10px;top:537px;left:auto">Ctrl+&amp;</span>
<span class="t" style="left:32px;top:562px">Paste Path Effect</span><span class="t k" style="right:10px;top:562px;left:auto">&amp;</span>
<span class="t" style="left:32px;top:587px">Remove Path Effect</span>
</div>

<!-- menu icons -->
<svg width="1304" height="931" style="left:0;top:0" fill="none">
<rect x="224" y="145" width="9" height="8" fill="#eee"/><circle cx="223" cy="145" r="5.500" fill="#ddd"/>
<path d="M222 169h11v8h-12z" fill="#eee"/><path d="M220 173a6 6 0 0 0 6-5l3 0-7 7z" fill="#1a56a5"/><circle cx="222" cy="168.500" r="5" fill="#b01da0"/>
<g opacity=".5"><circle cx="222" cy="194" r="5" fill="#d6237a"/></g>
<g opacity=".5"><rect x="224" y="221" width="8" height="7" fill="#888"/></g>
<path d="M224 244h9v9h-12z" fill="#eee"/><path d="M222 253l10-8" stroke="#2d2d2d" stroke-width="1.200"/><circle cx="222" cy="243" r="5" fill="#d6237a"/>
<circle cx="222" cy="268" r="5" fill="#7a2350"/><path d="M227 269h6v9h-9v-6" stroke="#eee" stroke-width="1.300"/>
<circle cx="222" cy="293" r="5" stroke="#ddd" stroke-width="1.200"/><rect x="224" y="295" width="8" height="8" stroke="#ddd" stroke-width="1.200"/>
<circle cx="223" cy="318" r="5" stroke="#ddd" stroke-width="1.200" stroke-dasharray="6 1.500"/><path d="M226 322h6v7h-8v-5" stroke="#ddd" stroke-width="1.200"/>
<circle cx="223" cy="344" r="3.500" stroke="#ddd" stroke-width="1.200"/><circle cx="229" cy="351" r="3.500" stroke="#ddd" stroke-width="1.200"/>
<path d="M222 370h11v9h-11z" fill="#eee"/><path d="M222 379l11-9" stroke="#2d2d2d"/><circle cx="221" cy="368" r="5" fill="#f0289a"/>
<circle cx="228" cy="394" r="5" fill="#eee"/><path d="M219 397h6v-2l3 3v6h-9z" fill="#eee"/>
<path d="M218 421a13 13 0 0 1 15 10" stroke="#aaa" stroke-width="1.800"/><path d="M218 425a9 9 0 0 1 6 3" stroke="#ccc" stroke-width="1.500"/><path d="M221 431l4-7 4 7z" fill="#1b7f2b"/>
<path d="M218 446a14 14 0 0 1 16 10" stroke="#bbb" stroke-width="1.800"/><path d="M218 450a10 10 0 0 1 6 2" stroke="#ccc" stroke-width="1.500"/><path d="M222 456l4-7 4 7z" fill="#1b7f2b"/>
<path d="M218 469a17 17 0 0 1 16 13M218 473a13 13 0 0 1 12 9M218 477a9 9 0 0 1 8 5" stroke="#ccc" stroke-width="1.600"/>
<path d="M218 494h9M218 498h5M219 502h6M221 506h7" stroke="#bbb" stroke-width="1.200"/><path d="M226 495h8v7h-8z" fill="#eee"/><path d="M228 495v-1a2 2 0 0 1 4 0v1" stroke="#eee" stroke-width="1.200"/>
</svg>

<!-- tooltip -->
<div style="left:151px;top:189px;width:57px;height:43px;background:#1c1c1c;border-radius:3px 0 0 3px"></div>
<div style="left:208px;top:189px;width:256px;height:43px;background:rgba(22,22,22,.84);border-radius:0 3px 3px 0"></div>
<div class="t" style="left:165px;top:204px;color:#eaeaea">Create difference of selected paths (bottom minus top)</div>

</div></body></html>
